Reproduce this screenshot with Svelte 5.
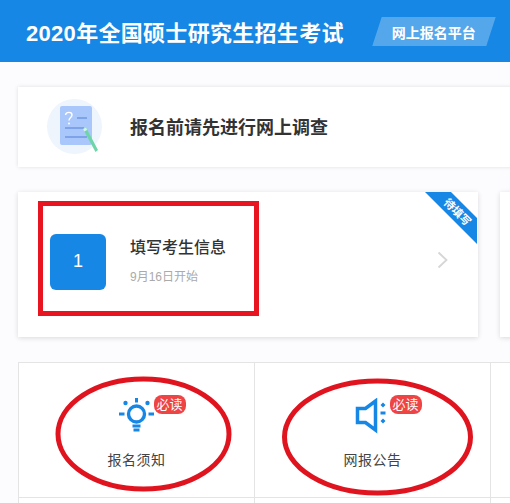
<script lang="ts">
  const links = [
    { name: "报名须知", icon: "bulb", must: true },
    { name: "网报公告", icon: "horn", must: true },
    { name: "", icon: "", must: false },
  ];
  const spare = ["a", "b", "c"];
</script>

<div class="page">
  <header class="top">
    <h1>2020年全国硕士研究生招生考试</h1>
    <div class="tag"><span>网上报名平台</span></div>
  </header>

  <section class="survey">
    <svg class="survey-icon" viewBox="0 0 56 56" width="56" height="56">
      <circle cx="27.5" cy="27.5" r="27.5" fill="#eef5fd" />
      <rect x="13" y="7" width="32" height="39" rx="2" fill="#a9c7fb" />
      <path d="M18.500 16c.5-3.500 6.500-3.500 6.500 0 0 2.500-3 2.500-3 5.500" fill="none" stroke="#fff" stroke-width="1.400" />
      <circle cx="22" cy="24.500" r="1" fill="#fff" />
      <path d="M30 19h10M18 29h19M18 38h22" stroke="#7fa3e8" stroke-width="2" />
      <path d="M36 30l3-1.500 12 22.500-2.500 2z" fill="#6dd5a8" />
      <path d="M36 30l3-1.500 1.200 2.500-3 1.500z" fill="#d4f4e6" />
    </svg>
    <h2>报名前请先进行网上调查</h2>
  </section>

  <section class="steps">
    <div class="step">
      <div class="num">1</div>
      <div class="step-text">
        <h3>填写考生信息</h3>
        <p>9月16日开始</p>
      </div>
      <svg class="arrow" viewBox="0 0 11 18" width="11" height="18">
        <path d="M1.500 1.500l8 7.500-8 7.500" fill="none" stroke="#d6d6d6" stroke-width="1.800" />
      </svg>
      <div class="ribbon"><span>待填写</span></div>
    </div>
    <div class="step"></div>
  </section>

  <section class="links">
    {#each links as link}
      <div class="cell">
        {#if link.name}
          <div class="cell-icon">
            {#if link.icon === "bulb"}
              <svg viewBox="0 0 40 36" width="40" height="36">
                <circle cx="19.500" cy="16" r="8" fill="none" stroke="#1787e5" stroke-width="3.400" />
                <path d="M15.500 28h8M16.500 32h6" stroke="#1787e5" stroke-width="2.800" />
                <path d="M19.500 0v4.500M2 16h5.500M31.500 16h5.500" stroke="#1787e5" stroke-width="3" />
                <circle cx="8.500" cy="5" r="2.200" fill="#1787e5" />
                <circle cx="30.500" cy="5" r="2.200" fill="#1787e5" />
              </svg>
            {:else}
              <svg viewBox="0 0 40 36" width="40" height="36">
                <path d="M4.500 10.500h8l10-7.500v29l-10-7.500h-8z" fill="none" stroke="#1787e5" stroke-width="3.500" />
                <path d="M27.500 7l2.500-2.500 2.500 2.500-2.500 2.500zM27.500 23l2.500-2.500 2.500 2.500-2.500 2.500z" fill="#1787e5" />
                <path d="M27.500 15h5" stroke="#1787e5" stroke-width="3" />
              </svg>
            {/if}
            <span class="must">必读</span>
          </div>
          <div class="label">{link.name}</div>
        {/if}
      </div>
    {/each}
    {#each spare as s (s)}
      <div class="cell"></div>
    {/each}
  </section>

  <svg class="marks" viewBox="0 0 510 503" width="510" height="503">
    <rect x="40.500" y="203.500" width="216" height="110" fill="none" stroke="#e8141f" stroke-width="5" />
    <ellipse cx="143.500" cy="434" rx="85.500" ry="55" fill="none" stroke="#e0141f" stroke-width="5" />
    <ellipse cx="377.500" cy="437" rx="93" ry="56" fill="none" stroke="#e0141f" stroke-width="5" />
  </svg>
</div>

<style>
  :global(body) {
    margin: 0;
    background: #fcfbfd;
  }

  .page {
    position: relative;
    width: 510px;
    height: 503px;
    overflow: hidden;
    font-family: "Liberation Sans", "Noto Sans CJK SC", sans-serif;
    color: #333;
  }

  .top {
    display: flex;
    align-items: center;
    height: 62px;
    padding-left: 26px;
    background: #1787e5;
    color: #fff;
  }
  .top h1 {
    margin: 0;
    font-size: 22px;
    font-weight: 700;
    letter-spacing: 0.3px;
    white-space: nowrap;
  }
  .tag {
    display: flex;
    align-items: center;
    justify-content: center;
    flex: 0 0 auto;
    width: 114px;
    height: 29px;
    margin-left: 33px;
    background: rgba(255, 255, 255, 0.27);
    transform: skewX(-18deg);
  }
  .tag span {
    font-size: 14px;
    font-weight: 700;
    transform: skewX(18deg);
  }

  .survey {
    display: flex;
    align-items: center;
    width: 600px;
    height: 80px;
    margin: 25px 0 0 18px;
    padding-left: 29px;
    box-sizing: border-box;
    background: #fff;
    box-shadow: 0 0 4px rgba(0, 0, 0, 0.12);
  }
  .survey-icon {
    flex: 0 0 auto;
  }
  .survey h2 {
    margin: 0 0 2px 27px;
    font-size: 18px;
    font-weight: 700;
    color: #333;
    white-space: nowrap;
  }

  .steps {
    display: flex;
    gap: 22px;
    margin: 25px 0 0 18px;
  }
  .step {
    position: relative;
    display: flex;
    align-items: center;
    flex: 0 0 auto;
    width: 460px;
    height: 145px;
    padding: 0 0 6px 32px;
    box-sizing: border-box;
    background: #fff;
    box-shadow: 0 1px 5px rgba(0, 0, 0, 0.14);
    overflow: hidden;
  }
  .num {
    display: flex;
    align-items: center;
    justify-content: center;
    width: 56px;
    height: 56px;
    border-radius: 6px;
    background: #1787e5;
    color: #fff;
    font-size: 18px;
  }
  .step-text {
    margin: 0 0 2px 24px;
  }
  .step-text h3 {
    margin: 0;
    font-size: 16px;
    font-weight: 500;
    line-height: 24px;
    color: #333;
  }
  .step-text p {
    margin: 8px 0 0;
    font-size: 12px;
    line-height: 18px;
    color: #aaa;
  }
  .arrow {
    position: absolute;
    right: 30px;
    top: 59px;
  }
  .ribbon {
    position: absolute;
    top: 0;
    right: 1px;
    width: 52px;
    height: 52px;
    background: #1787e5;
    clip-path: polygon(0 0, 26px 0, 100% 26px, 100% 100%);
  }
  .ribbon span {
    position: absolute;
    left: 16px;
    top: 13px;
    font-size: 11px;
    line-height: 14px;
    font-weight: 700;
    color: #fff;
    white-space: nowrap;
    transform: rotate(45deg);
  }

  .links {
    display: grid;
    grid-template-columns: repeat(3, 236px);
    grid-auto-rows: 135px;
    width: 708px;
    margin: 25px 0 0 18px;
    border-top: 1px solid #e4e4e4;
    border-left: 1px solid #e4e4e4;
  }
  .cell {
    display: flex;
    flex-direction: column;
    align-items: center;
    box-sizing: border-box;
    padding-top: 35px;
    border-right: 1px solid #e4e4e4;
    border-bottom: 1px solid #e4e4e4;
    background: #fff;
  }
  .cell-icon {
    position: relative;
    width: 40px;
    height: 36px;
  }
  .cell-icon svg {
    display: block;
  }
  .must {
    position: absolute;
    left: 37px;
    top: -3px;
    width: 32px;
    height: 19px;
    border-radius: 8px;
    background: #ef4444;
    color: #fff;
    font-size: 13px;
    line-height: 19px;
    text-align: center;
  }
  .label {
    margin-top: 16px;
    font-size: 14px;
    letter-spacing: 0.5px;
    line-height: 20px;
    color: #444;
  }

  .marks {
    position: absolute;
    left: 0;
    top: 0;
    pointer-events: none;
  }
</style>
